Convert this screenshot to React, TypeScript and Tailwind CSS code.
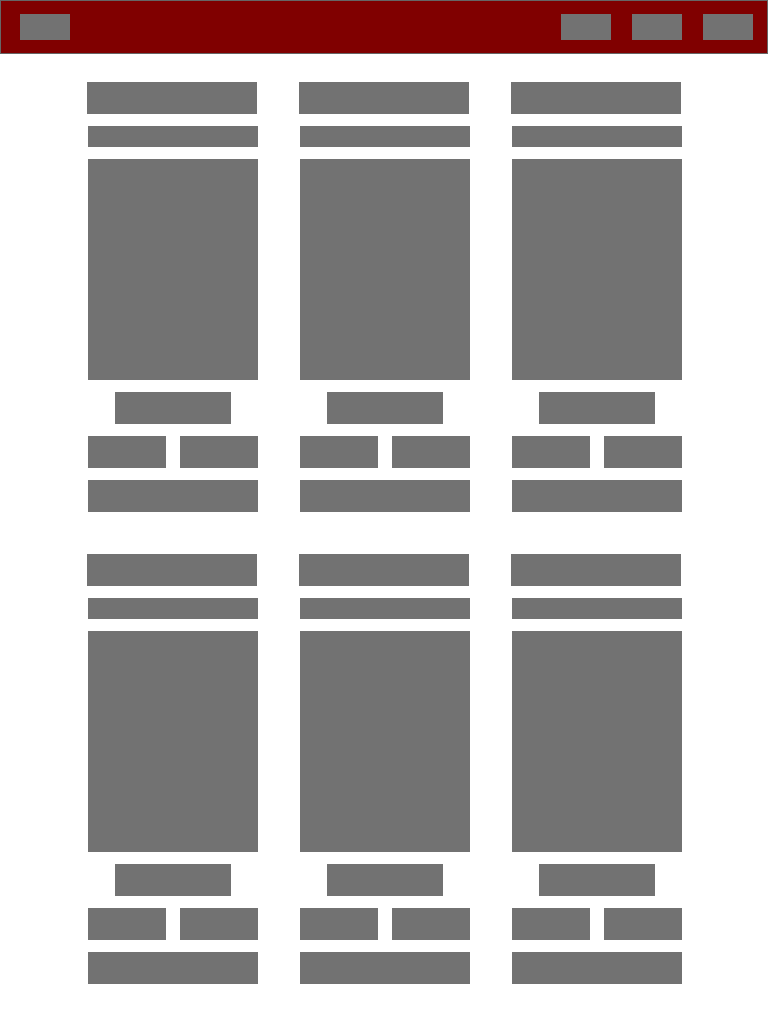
const Block = ({ className = '' }: { className?: string }) => (
  <div className={`bg-[#727272] ${className}`} />
)

const Card = () => (
  <div className="flex flex-col gap-3 w-[170px]">
    <Block className="h-8 w-[170px] -ml-px" />
    <Block className="h-[21px] w-full" />
    <Block className="h-[221px] w-full" />
    <div className="flex justify-center">
      <Block className="h-8 w-[116px]" />
    </div>
    <div className="flex justify-between">
      <Block className="h-8 w-[78px]" />
      <Block className="h-8 w-[78px]" />
    </div>
    <Block className="h-8 w-full" />
  </div>
)

const App = () => {
  const cards = [1, 2, 3, 4, 5, 6]

  return (
    <div className="min-h-[1024px] w-[768px] bg-white">
      <header className="h-[54px] border border-[#666666] bg-[#800000] flex items-center justify-between pl-[19px] pr-[14px]">
        <Block className="h-[26px] w-[50px]" />
        <nav className="flex gap-[21px]">
          <Block className="h-[26px] w-[50px]" />
          <Block className="h-[26px] w-[50px]" />
          <Block className="h-[26px] w-[50px]" />
        </nav>
      </header>
      <main className="pt-7 pl-[88px] grid grid-cols-[repeat(3,170px)] gap-x-[42px] gap-y-[42px]">
        {cards.map(id => (
          <Card key={id} />
        ))}
      </main>
    </div>
  )
}

export default App
